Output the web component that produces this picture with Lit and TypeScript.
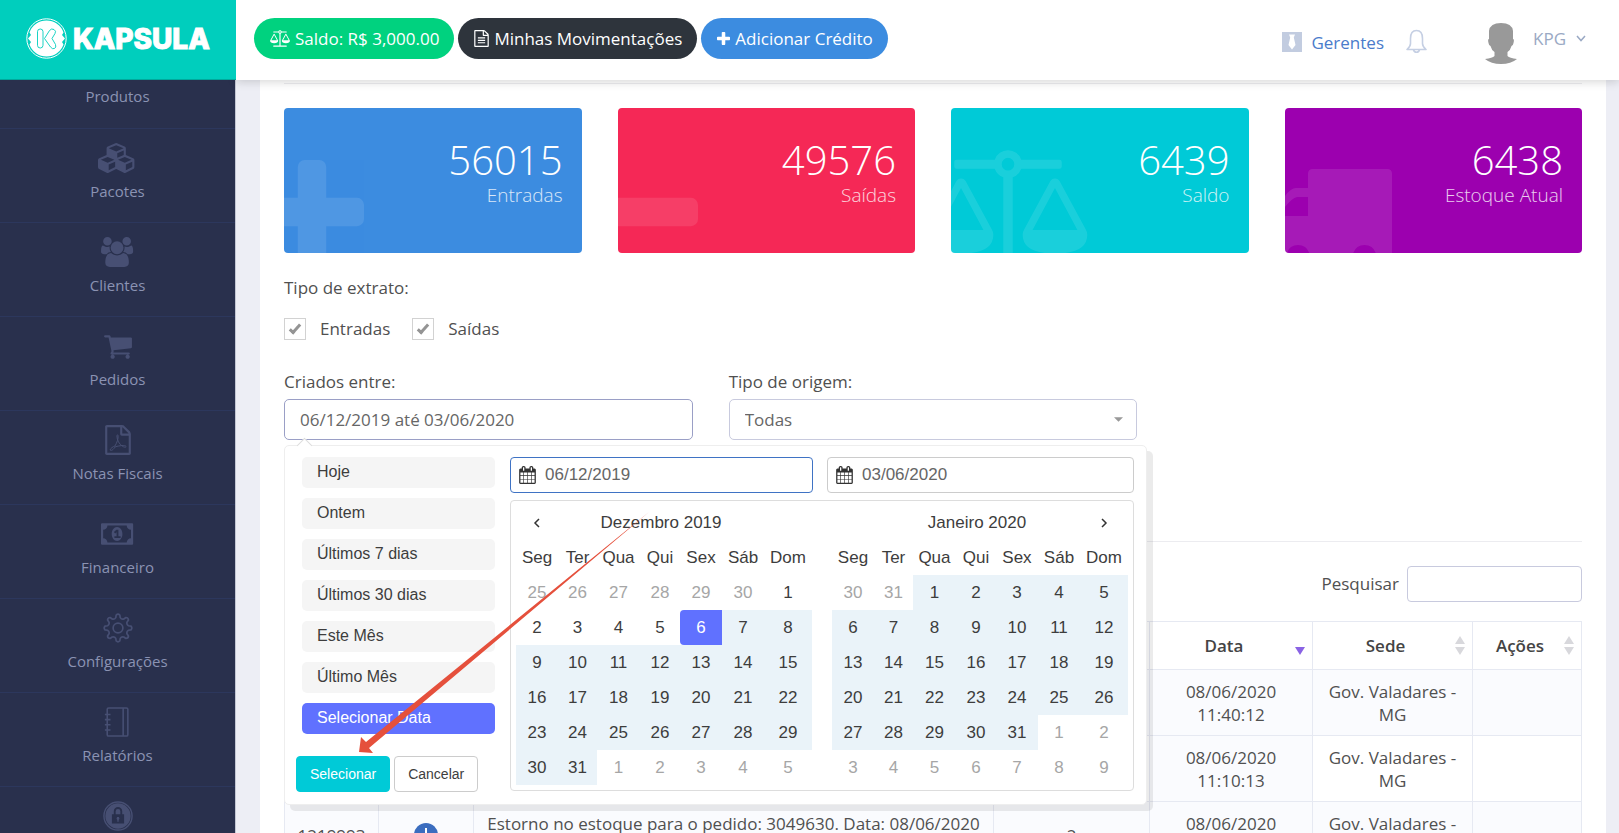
import { LitElement, html, svg, css } from "lit";
import { customElement, state } from "lit/decorators.js";
import { classMap } from "lit/directives/class-map.js";

const FILE_OUTLINE =
  "M1596 380q28 28 48 76t20 88v1152q0 40-28 68t-68 28h-1344q-40 0-68-28t-28-68v-1600q0-40 28-68t68-28h896q40 0 88 20t76 48zm-444-244v376h376q-10-29-22-41l-313-313q-12-12-41-22zm384 1528v-1024h-416q-40 0-68-28t-28-68v-416h-768v1536h1280z";

const scales = svg`
  <path d="M1000 0a190 190 0 0 1 180 128H1700a32 32 0 0 1 32 32v60a32 32 0 0 1-32 32H1180a190 190 0 0 1-116 116V1664H1700a32 32 0 0 1 32 32v64a32 32 0 0 1-32 32H300a32 32 0 0 1-32-32v-64a32 32 0 0 1 32-32H936V368a190 190 0 0 1-116-116H300a32 32 0 0 1-32-32v-60a32 32 0 0 1 32-32H820A190 190 0 0 1 1000 0zm0 104a86 86 0 1 0 0 172a86 86 0 0 0 0-172z" fill-rule="evenodd"/>
  <path fill-rule="evenodd" d="M360 384q44 0 64 40l352 650q24 40 24 78q0 256-440 256T-80 1152q0-38 24-78L296 424q20-40 64-40zm0 130L54 1088H666zM1640 384q44 0 64 40l352 650q24 40 24 78q0 256-440 256t-440-256q0-38 24-78L1576 424q20-40 64-40zm0 130l-306 574h612z"/>`;

const polar = (deg: number, r: number) => {
  const a = (deg * Math.PI) / 180;
  return `${(16 + r * Math.cos(a)).toFixed(2)} ${(16 + r * Math.sin(a)).toFixed(2)}`;
};

// Eight teeth: each one rises from the root circle, curves over its tip, and falls back through a rounded valley.
const gearPath =
  [0, 45, 90, 135, 180, 225, 270, 315]
    .map((a, i) => `${i ? "L" : "M"}${polar(a - 12, 11.4)}L${polar(a - 8, 14)}Q${polar(a, 15.6)} ${polar(a + 8, 14)}L${polar(a + 12, 11.4)}Q${polar(a + 22.5, 9.6)} ${polar(a + 33, 11.4)}`)
    .join("") + "z";

const icons = {
  cubes: html`<svg viewBox="0 0 2304 1792" aria-hidden="true"><path d="M640 1632l384-192v-314l-384 164v342zm-64-454l404-173-404-173-404 173zm1088 454l384-192v-314l-384 164v342zm-64-454l404-173-404-173-404 173zm-448-293l384-165v-266l-384 164v267zm-64-379l441-189-441-189-441 189zm1088 518v416q0 36-19 67t-52 47l-448 224q-25 14-57 14t-57-14l-448-224q-4-2-7-4-2 2-7 4l-448 224q-25 14-57 14t-57-14l-448-224q-33-16-52-47t-19-67v-416q0-38 21.500-70t56.500-48l434-186v-400q0-38 21.500-70t56.500-48l448-192q23-10 50-10t50 10l448 192q35 16 56.500 48t21.500 70v400l434 186q36 16 57 48t21 70z"/></svg>`,
  users: html`<svg viewBox="-64 0 1920 1792" aria-hidden="true"><path d="M529 896q-162 5-265 128h-134q-82 0-138-40.500t-56-118.500q0-353 124-353 6 0 43.500 21t97.500 42.500 119 21.500q67 0 133-23-5 37-5 66 0 139 81 256zm1071 637q0 120-73 189.500t-194 69.500h-874q-121 0-194-69.500t-73-189.500q0-53 3.500-103.500t14-109 26.500-108.500 43-97.500 62-81 85.500-53.500 111.500-20q10 0 43 21.500t73 48 107 48 135 21.500 135-21.500 107-48 73-48 43-21.500q61 0 111.500 20t85.500 53.500 62 81 43 97.500 26.500 108.500 14 109 3.500 103.500zm-1024-1277q0 106-75 181t-181 75-181-75-75-181 75-181 181-75 181 75 75 181zm704 384q0 159-112.500 271.500t-271.500 112.500-271.500-112.500-112.500-271.500 112.500-271.500 271.500-112.500 271.500 112.500 112.500 271.500zm576 225q0 78-56 118.500t-138 40.500h-134q-103-123-265-128 81-117 81-256 0-29-5-66 66 23 133 23 59 0 119-21.500t97.500-42.500 43.500-21q124 0 124 353zm-128-609q0 106-75 181t-181 75-181-75-75-181 75-181 181-75 181 75 75 181z"/></svg>`,
  cart: html`<svg viewBox="0 0 1792 1792" aria-hidden="true"><path d="M704 1536q0 52-38 90t-90 38-90-38-38-90 38-90 90-38 90 38 38 90zm896 0q0 52-38 90t-90 38-90-38-38-90 38-90 90-38 90 38 38 90zm128-1088v512q0 24-16.500 42.500t-40.500 21.500l-1044 122q13 60 13 70 0 16-24 64h920q26 0 45 19t19 45-19 45-45 19h-1024q-26 0-45-19t-19-45q0-11 8-31.500t16-36 21.500-40 15.500-29.500l-177-823h-204q-26 0-45-19t-19-45 19-45 45-19h256q16 0 28.500 6.500t19.500 15.500 13 24.500 8 26 5.500 29.500 4.500 26h1201q26 0 45 19t19 45z"/></svg>`,
  pdf: html`<svg viewBox="0 0 1792 1792" aria-hidden="true"><path d=${FILE_OUTLINE}/><path fill="none" stroke="currentColor" stroke-width="58" stroke-linejoin="round" d="M420 1490c40-100 160-190 300-240c110-210 210-420 180-620c-10-60-70-50-70 20c0 260 150 500 330 620c80 50 190 80 220 30c20-60-120-80-260-70c-160 10-280 40-400 80c-100 160-220 260-300 180z"/></svg>`,
  money: html`<svg viewBox="0 0 1920 1792" aria-hidden="true"><path fill-rule="evenodd" d="M64 256h1792a64 64 0 0 1 64 64v1152a64 64 0 0 1-64 64H64a64 64 0 0 1-64-64V320a64 64 0 0 1 64-64zM384 384a256 256 0 0 1-256 256v512a256 256 0 0 1 256 256h1152a256 256 0 0 1 256-256V640a256 256 0 0 1-256-256z"/><path fill-rule="evenodd" d="M960 480c180 0 320 190 320 416s-140 416-320 416s-320-190-320-416s140-416 320-416zM920 640L770 780l76 80l84-76v240H800v108h370v-108h-130V640z"/></svg>`,
  gear: html`<svg viewBox="0 0 32 32" aria-hidden="true"><g fill="none" stroke="currentColor" stroke-width="1.800" stroke-linejoin="round"><circle cx="16" cy="16" r="5.200"/><path d=${gearPath}/></g></svg>`,
  notebook: html`<svg viewBox="0 0 32 32" aria-hidden="true"><g fill="none" stroke="currentColor" stroke-width="1.700"><rect x="4.500" y="1" width="22" height="30" rx="1.500"/><path d="M21.500 1v30M2 8h6M2 13.500h6M2 19h6M2 24.500h6"/></g></svg>`,
  lock: html`<svg viewBox="0 0 32 32" aria-hidden="true"><circle cx="16" cy="16" r="15" fill="none" stroke="currentColor" stroke-width="1.500"/><path fill-rule="evenodd" d="M16 2.500a13.500 13.500 0 1 1 0 27a13.500 13.500 0 0 1 0-27zM9.500 14v10h13V14h-2v-3a4.500 4.500 0 0 0-9 0v3zM13.500 14v-3a2.500 2.500 0 0 1 5 0v3zM15 17h2l.6 2l-.9 1.200V22h-1.400v-1.800l-.9-1.200z"/></svg>`,
  scales: html`<svg viewBox="-90 0 2180 1792" aria-hidden="true">${scales}</svg>`,
  file: html`<svg viewBox="128 0 1536 1792" aria-hidden="true"><path d=${FILE_OUTLINE}/><path d="M512 768h768v128H512zM512 1024h768v128H512zM512 1280h768v128H512z"/></svg>`,
  plus: html`<svg viewBox="192 128 1408 1408" aria-hidden="true"><path d="M1600 736v192q0 40-28 68t-68 28h-416v416q0 40-28 68t-68 28h-192q-40 0-68-28t-28-68v-416h-416q-40 0-68-28t-28-68v-192q0-40 28-68t68-28h416v-416q0-40 28-68t68-28h192q40 0 68 28t28 68v416h416q40 0 68 28t28 68z"/></svg>`,
  minus: html`<svg viewBox="192 128 1408 1408" aria-hidden="true"><rect x="192" y="640" width="1408" height="384" rx="96"/></svg>`,
  truck: html`<svg viewBox="0 0 144 145" aria-hidden="true"><path fill-rule="evenodd" d="M28 61h74q5 0 5 5v79H90.800a12 12 0 0 0-22.600 0H24.300a12 12 0 0 0-22.600 0H0V88Q6 80 11 80H23V66q0-5 5-5zM23 89H12Q7 90 0 99v9h23z"/></svg>`,
  calendar: html`<svg viewBox="64 0 1664 1792" aria-hidden="true"><path d="M192 1664h288v-288h-288v288zm352 0h320v-288h-320v288zm-352-352h288v-320h-288v320zm352 0h320v-320h-320v320zm-352-384h288v-288h-288v288zm736 736h320v-288h-320v288zm-384-736h320v-288h-320v288zm768 736h288v-288h-288v288zm-384-352h320v-320h-320v320zm-352-864v-288q0-13-9.500-22.500t-22.500-9.500h-64q-13 0-22.500 9.500t-9.500 22.500v288q0 13 9.500 22.500t22.500 9.500h64q13 0 22.500-9.500t9.500-22.500zm736 864h288v-320h-288v320zm-384-384h320v-288h-320v288zm384 0h288v-288h-288v288zm32-480v-288q0-13-9.500-22.500t-22.500-9.500h-64q-13 0-22.500 9.500t-9.500 22.500v288q0 13 9.500 22.500t22.500 9.500h64q13 0 22.500-9.500t9.500-22.500zm384-64v1280q0 52-38 90t-90 38h-1408q-52 0-90-38t-38-90v-1280q0-52 38-90t90-38h128v-96q0-66 47-113t113-47h64q66 0 113 47t47 113v96h384v-96q0-66 47-113t113-47h64q66 0 113 47t47 113v96h128q52 0 90 38t38 90z"/></svg>`,
};

const MENU = [
  { label: "Pacotes", icon: icons.cubes },
  { label: "Clientes", icon: icons.users },
  { label: "Pedidos", icon: icons.cart },
  { label: "Notas Fiscais", icon: icons.pdf },
  { label: "Financeiro", icon: icons.money },
  { label: "Configurações", icon: icons.gear },
  { label: "Relatórios", icon: icons.notebook },
  { label: "", icon: icons.lock },
];

const STATS = [
  { value: "56015", label: "Entradas", tone: "blue", icon: icons.plus },
  { value: "49576", label: "Saídas", tone: "pink", icon: icons.minus },
  { value: "6439", label: "Saldo", tone: "cyan", icon: icons.scales },
  { value: "6438", label: "Estoque Atual", tone: "purple", icon: icons.truck },
];

const RANGES = ["Hoje", "Ontem", "Últimos 7 dias", "Últimos 30 dias", "Este Mês", "Último Mês", "Selecionar Data"];
const WEEKDAYS = ["Seg", "Ter", "Qua", "Qui", "Sex", "Sáb", "Dom"];

@customElement("range-calendar")
class RangeCalendar extends LitElement {
  static properties = { year: { type: Number }, month: { type: Number }, heading: {}, nav: {} };
  declare year: number;
  declare month: number;
  declare heading: string;
  declare nav: string;

  static styles = css`
    :host { display: block; }
    table { width: 296px; table-layout: fixed; border-collapse: collapse; font: 17px/20px "Liberation Sans", Arial, sans-serif; color: #3d3d3d; }
    th, td { height: 35px; padding: 0; text-align: center; vertical-align: middle; font-weight: 400; }
    .c0, .c4, .c5 { width: 42px; } .c1 { width: 39px; } .c2 { width: 43px; } .c3 { width: 40px; } .c6 { width: 48px; }
    .out { color: #a6a6a6; }
    .range { background: #eaf3f9; }
    .start { background: #6071ff; color: #fff; border-radius: 4px 0 0 4px; }
    button { border: 0; background: none; padding: 8px; font: inherit; color: inherit; display: block; margin: 0 auto; }
    svg { display: block; width: 8px; height: 10px; fill: none; stroke: #333; stroke-width: 1.5; }
  `;

  private arrow(side: string) {
    if (side !== this.nav) return null;
    return html`<button aria-label=${side === "prev" ? "Mês anterior" : "Próximo mês"}>
      <svg viewBox="0 0 8 10"><path d=${side === "prev" ? "M6 1L2 5l4 4" : "M2 1l4 4-4 4"} /></svg>
    </button>`;
  }

  render() {
    const first = new Date(this.year, this.month, 1);
    // The grid always opens on the Monday before the first of the month.
    const lead = (first.getDay() + 6) % 7;
    const from = new Date(2019, 11, 6).getTime();
    const to = new Date(2020, 5, 3).getTime();
    const weeks = [0, 1, 2, 3, 4, 5].map((w) =>
      [0, 1, 2, 3, 4, 5, 6].map((d) => new Date(this.year, this.month, 1 - lead + w * 7 + d))
    );
    return html`<table>
      <colgroup>${WEEKDAYS.map((_, i) => html`<col class="c${i}" />`)}</colgroup>
      <thead>
        <tr><th>${this.arrow("prev")}</th><th colspan="5">${this.heading}</th><th>${this.arrow("next")}</th></tr>
        <tr>${WEEKDAYS.map((d) => html`<th scope="col">${d}</th>`)}</tr>
      </thead>
      <tbody>
        ${weeks.map((week) => html`<tr>${week.map((day) => {
          const out = day.getMonth() !== this.month;
          const t = day.getTime();
          return html`<td class=${classMap({ out, range: !out && t > from && t <= to, start: !out && t === from })}>${day.getDate()}</td>`;
        })}</tr>`)}
      </tbody>
    </table>`;
  }
}

@customElement("app-root")
class AppRoot extends LitElement {
  @state() private range = "Selecionar Data";

  static styles = css`
    :host { display: grid; grid-template: 80px minmax(0, 1fr) / 236px minmax(0, 1fr); height: 100vh; overflow: hidden;
      background: #edeef5; color: #505050; font: 17px/24px "Open Sans", "Noto Sans", sans-serif; }
    *, *::before, *::after { box-sizing: border-box; }
    button, input, select { font: inherit; color: inherit; margin: 0; }
    button { cursor: pointer; }
    a { color: inherit; text-decoration: none; }
    svg { display: block; fill: currentColor; }

    .brand { background: #00cebd; color: #fff; display: flex; align-items: center; gap: 6px; padding: 0 0 2px 26px; z-index: 3;
      border-bottom: 1px solid #00a99c; font: 800 28px/32px Inter, sans-serif; -webkit-text-stroke: 1px #fff; }
    .brand svg { width: 41px; height: 41px; }
    .top { background: #fff; z-index: 2; display: flex; align-items: center; padding: 0 33px 3px 18px; box-shadow: 0 2px 9px rgba(0, 0, 0, 0.16); }
    .pills { display: flex; gap: 4px; flex: 1; }
    .pill { height: 41px; padding: 0 15px 0 16px; border-radius: 21px; color: #fff; display: flex; align-items: center; gap: 5px; white-space: nowrap; }
    .pill svg { height: 17px; }
    .pill.green { background: #00d27f; } .pill.green svg { width: 20px; }
    .pill.dark { background: #2e343c; } .pill.dark svg { width: 15px; }
    .pill.blue { background: #3c8ce0; } .pill.blue svg { width: 13px; height: 13px; }
    .user { display: flex; align-items: center; color: #9aa9c4; }
    .managers { display: flex; align-items: center; gap: 9px; color: #4a7bcb; padding-top: 9px; margin-right: 22px; }
    .managers svg { width: 20px; height: 20px; color: #c2cce0; margin-bottom: 3px; }
    .bell { border: 0; background: none; padding: 4px 0 0; margin-right: 58px; color: #c5cfe3; }
    .bell svg { width: 21px; height: 24px; }
    .avatar { width: 32px; height: 41px; color: #999; margin: 10px 16px 0 0; }
    .account { border: 0; background: none; padding: 0; display: flex; align-items: center; gap: 10px; }
    .account svg { width: 10px; height: 7px; }

    nav { background: #29304d; overflow: hidden; border-right: 1px solid #c3c6d3; color: #8b93b3; font-size: 15px; line-height: 20px; }
    .item { display: flex; flex-direction: column; align-items: center; gap: 8px; height: 94px; padding-top: 14px; border-bottom: 1px solid #2c375d; }
    .item.cut { height: 49px; padding-top: 6px; }
    .item svg { height: 30px; width: auto; color: #474f73; }

    main { padding: 0 13px 0 24px; overflow: hidden; }
    .panel { background: #fff; padding: 3px 24px 24px; }
    hr { border: 0; border-top: 1px solid #ececf0; margin: 0; }
    .stats { display: grid; grid-template-columns: repeat(4, 1fr); gap: 36px; margin-top: 24px; }
    .stat { height: 145px; border-radius: 4px; overflow: hidden; position: relative; color: #fff; text-align: right; padding: 27px 19px 0; }
    .stat.blue { background: #3c8ce0; } .stat.pink { background: #f52856; } .stat.cyan { background: #00cad7; } .stat.purple { background: #9c00af; }
    .num { font-size: 40px; line-height: 50px; font-weight: 300; }
    .cap { font-size: 19px; line-height: 20px; font-weight: 300; opacity: 0.8; }
    .stat svg { position: absolute; opacity: 0.1; width: 104px; height: 104px; left: -24px; top: 52px; }
    .stat.cyan svg { width: 160px; height: 132px; left: -23px; top: 42px; }
    .stat.purple svg { width: 144px; height: 145px; left: 0; top: 0; }

    .legend { margin-top: 23px; }
    fieldset { border: 0; margin: 0; padding: 0; }
    legend { padding: 0; }
    .checks { display: flex; gap: 22px; margin-top: 18px; }
    .checks label { display: flex; align-items: center; gap: 14px; height: 22px; }
    .checks input { appearance: none; width: 22px; height: 22px; border: 1px solid #d2d2d2; display: grid; place-items: center; }
    .checks input:checked::before { content: ""; width: 12px; height: 6px; border: solid #949494; border-width: 0 0 3px 3px; transform: rotate(-48deg); margin-bottom: 3px; }

    .filters { display: grid; grid-template-columns: repeat(3, 1fr); gap: 36px; margin-top: 30px; }
    .field { display: flex; flex-direction: column; gap: 5px; position: relative; }
    .box { width: 100%; height: 41px; border: 1px solid #c8cade; border-radius: 5px; background: #fff; color: #666; padding: 0 15px; outline: 0; }
    .box.on { border-color: #9a9fc6; }
    .select { display: grid; align-items: center; }
    .select > * { grid-area: 1 / 1; }
    select.box { appearance: none; }
    .select svg { width: 9px; height: 5px; justify-self: end; margin-right: 14px; color: #999; pointer-events: none; }

    .popup { position: absolute; top: 75px; left: 0; z-index: 1; width: 863px; display: flex; gap: 15px; padding: 11px 12px 12px 11px;
      background: #fff; border: 1px solid #eee; border-radius: 5px; box-shadow: 6px 6px 0 rgba(0, 0, 0, 0.08);
      font-family: "Liberation Sans", Arial, sans-serif; color: #3d3d3d; }
    .popup::before { content: ""; position: absolute; top: -6px; left: 14px; width: 11px; height: 11px; background: #fff;
      border: solid #ddd; border-width: 1px 0 0 1px; transform: rotate(45deg); }
    .ranges { width: 199px; display: flex; flex-direction: column; gap: 10px; }
    .range { margin: 0 0 0 6px; height: 31px; border: 0; border-radius: 5px; background: #f5f5f5; padding: 0 15px 1px; text-align: left; font-size: 16px; line-height: 20px; }
    .range.on { background: #6071ff; color: #fff; }
    .actions { display: flex; gap: 4px; margin-top: 12px; }
    .actions button { height: 36px; padding: 0 13px; border-radius: 4px; border: 1px solid #ccc; background: #fff; font-size: 14px; line-height: 20px; }
    .actions .go { border-color: #00cad7; background: #00cad7; color: #fff; }
    .picker { flex: 1; display: flex; flex-direction: column; gap: 7px; }
    .dates { display: grid; grid-template-columns: 303px 1fr; gap: 14px; }
    .date { display: flex; align-items: center; gap: 9px; height: 36px; border: 1px solid #ccc; border-radius: 4px; padding: 0 8px; }
    .date.on { border-color: #3f73c4; }
    .date svg { width: 17px; height: 18px; color: #333; }
    .date input { border: 0; outline: 0; padding: 0; min-width: 0; flex: 1; color: #666; background: none; }
    .months { display: flex; justify-content: space-between; border: 1px solid #ddd; border-radius: 4px; padding: 4px 5px 5px; }

    .results { margin-top: 101px; }
    .search { display: flex; justify-content: flex-end; align-items: center; gap: 8px; margin: 24px 0 19px; }
    .search .box { width: 175px; height: 36px; border-radius: 4px; }
    .rows { width: 100%; table-layout: fixed; border-collapse: collapse; line-height: 23px; }
    .rows th, .rows td { border: 1px solid #e6e9f2; text-align: center; }
    .rows th { height: 48px; padding: 0 7px 0 3px; font-weight: 600; color: #444; }
    .rows td { padding: 10px 12px 9px; }
    .rows tbody tr:nth-child(odd), .rows .sorted { background: #fafbfe; }
    .w-id { width: 94px; } .w-type { width: 95px; } .w-qty { width: 156px; } .w-date { width: 163px; } .w-site { width: 160px; } .w-act { width: 109px; }
    .sort { display: flex; align-items: center; width: 100%; border: 0; background: none; padding: 0; font-weight: 600; }
    .sort span { flex: 1; }
    .sort svg { width: 10px; height: 19px; color: #d8d8dc; }
    .sort.desc svg { color: #8a63e4; }
    .badge { width: 24px; height: 24px; margin: 0 auto; color: #3b6dbf; }
    .pointer { position: absolute; z-index: 2; left: 73px; top: 66px; width: 292px; height: 242px; color: #e5503c; pointer-events: none; }
  `;

  private sortHead(label: string, desc = false) {
    return html`<button class=${classMap({ sort: true, desc })}><span>${label}</span>
      <svg viewBox="0 0 10 19" aria-hidden="true">${desc ? null : svg`<path d="M5 0l5 8H0z"/>`}<path d="M0 11h10l-5 8z" /></svg></button>`;
  }

  private row(id: unknown, badge: unknown, text: string, qty: string, date: string) {
    return html`<tr><td>${id}</td><td>${badge}</td><td>${text}</td><td>${qty}</td>
      <td class="sorted">${date}</td><td>Gov. Valadares - MG</td><td></td></tr>`;
  }

  private popup() {
    return html`<div class="popup" role="dialog" aria-label="Período">
      <div class="ranges">
        ${RANGES.map((r) => html`<button class=${classMap({ range: true, on: r === this.range })} @click=${() => (this.range = r)}>${r}</button>`)}
        <div class="actions"><button class="go">Selecionar</button><button>Cancelar</button></div>
      </div>
      <div class="picker">
        <div class="dates">
          <label class="date on">${icons.calendar}<input aria-label="Data inicial" .value=${"06/12/2019"} /></label>
          <label class="date">${icons.calendar}<input aria-label="Data final" .value=${"03/06/2020"} /></label>
        </div>
        <div class="months">
          <range-calendar .year=${2019} .month=${11} heading="Dezembro 2019" nav="prev"></range-calendar>
          <range-calendar .year=${2020} .month=${0} heading="Janeiro 2020" nav="next"></range-calendar>
        </div>
      </div>
      <svg class="pointer" viewBox="0 0 292 242" aria-hidden="true"><path d="M291 0L8 230L3 225L1 240L15 241L11 236z" /></svg>
    </div>`;
  }

  render() {
    return html`
      <a class="brand" href="#">
        <svg viewBox="0 0 41 41" aria-hidden="true">
          <circle cx="20.500" cy="20.500" r="19.700" fill="none" stroke="#fff" stroke-width="1" />
          <path d="M20.500 2.500a18 18 0 0 1 17 12l-1.500 2.500l3 3.500l-3 3.500l1.500 2.500a18 18 0 0 1-34 0L5 24l-3-3.500L5 17l-1.500-2.500a18 18 0 0 1 17-12z" />
          <g fill="none" stroke="#00cebd" stroke-width=".9" stroke-linejoin="round"><rect x="11.500" y="11" width="5.500" height="19" rx="2.700" />
          <path d="M18.500 20.500l5-8q2-2.500 4.500-1t1 4l-3 5l3.500 6q1 3-1 4t-4-1.500z" /></g>
        </svg>
        <span>KAPSULA</span>
      </a>
      <header class="top">
        <div class="pills">
          <a class="pill green" href="#">${icons.scales}Saldo: R$ 3,000.00</a>
          <a class="pill dark" href="#">${icons.file}Minhas Movimentações</a>
          <a class="pill blue" href="#">${icons.plus}Adicionar Crédito</a>
        </div>
        <div class="user">
          <a class="managers" href="#"><svg viewBox="0 0 20 20" aria-hidden="true"><path fill-rule="evenodd" d="M0 0h20v20H0zM7 2.500l1.200 3L6.500 13l3.500 4.500l3.500-4.500l-1.700-7.500l1.200-3z" /></svg>Gerentes</a>
          <button class="bell" aria-label="Notificações"><svg viewBox="0 0 21 24" aria-hidden="true"><g fill="none" stroke="currentColor" stroke-width="1.600" stroke-linejoin="round"><path d="M10.500 1.500q6 0 6 8v5q0 3 3.500 6H1q3.500-3 3.500-6v-5q0-8 6-8z" /><path d="M7.500 20.500q.5 2.700 3 2.700t3-2.700" /></g></svg></button>
          <svg class="avatar" viewBox="0 0 32 41" aria-hidden="true"><path d="M16 0q11 0 12 8v8q1.500 0 .5 4q-.5 3-2 3q-1 4-4 6v4q2 2 9.500 3q-6 5-16 5T0 36q7.500-1 9.500-3v-4q-3-2-4-6q-1.500 0-2-3q-1-4 .5-4V8q1-8 12-8z" /></svg>
          <button class="account">KPG<svg viewBox="0 0 10 7" aria-hidden="true"><path fill="none" stroke="currentColor" stroke-width="1.500" d="M1 1l4 4.500L9 1" /></svg></button>
        </div>
      </header>
      <nav>
        <a class="item cut" href="#">Produtos</a>
        ${MENU.map((m) => html`<a class="item" href="#">${m.icon}${m.label}</a>`)}
      </nav>
      <main>
        <div class="panel">
          <hr />
          <section class="stats">
            ${STATS.map((s) => html`<div class="stat ${s.tone}">${s.icon}<div class="num">${s.value}</div><div class="cap">${s.label}</div></div>`)}
          </section>
          <fieldset class="legend">
            <legend>Tipo de extrato:</legend>
            <div class="checks">
              <label><input type="checkbox" .checked=${true} />Entradas</label>
              <label><input type="checkbox" .checked=${true} />Saídas</label>
            </div>
          </fieldset>
          <div class="filters">
            <div class="field">
              <label for="period">Criados entre:</label>
              <input id="period" class="box on" .value=${"06/12/2019 até 03/06/2020"} />
              ${this.popup()}
            </div>
            <div class="field">
              <label for="origin">Tipo de origem:</label>
              <div class="select"><select id="origin" class="box"><option>Todas</option></select><svg viewBox="0 0 10 5" aria-hidden="true"><path d="M0 0h10L5 5z" /></svg></div>
            </div>
          </div>
          <section class="results">
            <hr />
            <div class="search"><label for="search">Pesquisar</label><input id="search" class="box" type="search" /></div>
            <table class="rows">
              <colgroup><col class="w-id" /><col class="w-type" /><col /><col class="w-qty" /><col class="w-date" /><col class="w-site" /><col class="w-act" /></colgroup>
              <thead><tr><th></th><th></th><th></th><th></th><th>${this.sortHead("Data", true)}</th><th>${this.sortHead("Sede")}</th><th>${this.sortHead("Ações")}</th></tr></thead>
              <tbody>
                ${this.row("", "", "", "", "08/06/2020 11:40:12")}
                ${this.row("", "", "", "", "08/06/2020 11:10:13")}
                ${this.row(
                  "1219993",
                  html`<svg class="badge" viewBox="0 0 24 24" aria-hidden="true"><circle cx="12" cy="12" r="12" /><path fill="#fff" d="M11 5h2v6h5v2h-5v6h-2v-6H6v-2h5z" /></svg>`,
                  "Estorno no estoque para o pedido: 3049630. Data: 08/06/2020 11:10:13",
                  "2",
                  "08/06/2020 11:10:13"
                )}
              </tbody>
            </table>
          </section>
        </div>
      </main>
    `;
  }
}
